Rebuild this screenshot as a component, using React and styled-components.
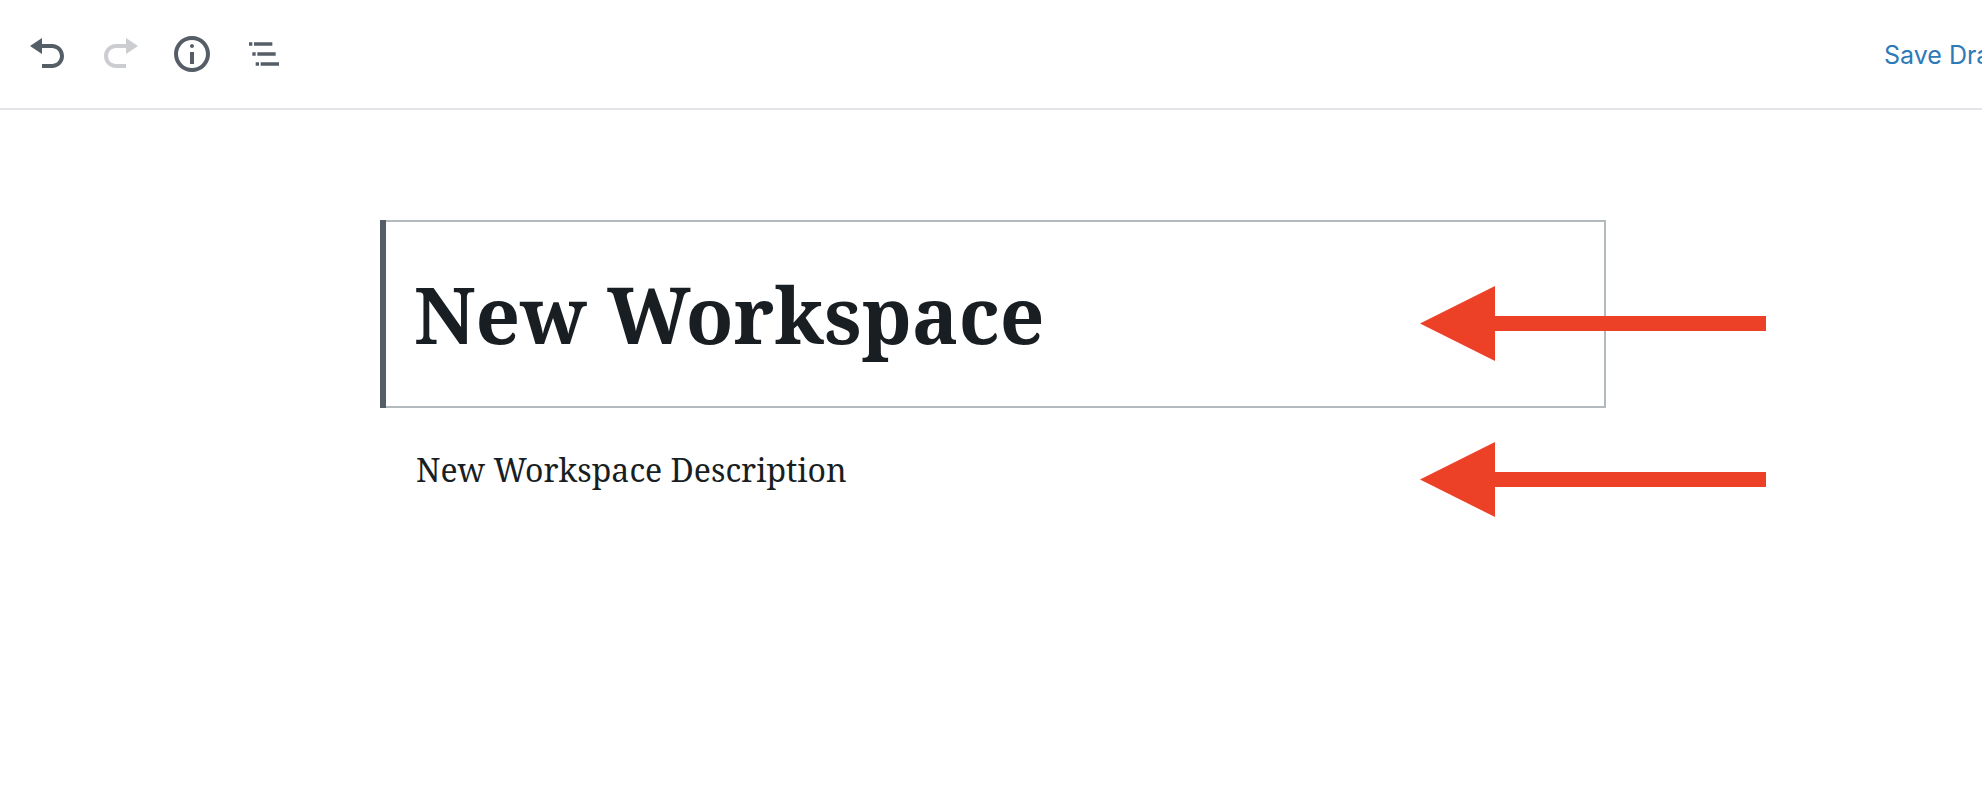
import React from "react";
import styled, { createGlobalStyle } from "styled-components";

const GlobalStyle = createGlobalStyle`
  *, *::before, *::after { box-sizing: border-box; }
  body {
    margin: 0;
    background: #fff;
    color: #191e23;
    font-family: Inter, "Liberation Sans", sans-serif;
  }
`;

const Page = styled.div`
  min-height: 100vh;
`;

const Header = styled.header`
  display: flex;
  align-items: center;
  justify-content: space-between;
  height: 110px;
  padding-left: 12px;
  border-bottom: 2px solid #e2e4e7;
  overflow: hidden;
`;

const Toolbar = styled.div`
  display: flex;
  align-items: center;
`;

const IconButton = styled.button`
  display: flex;
  padding: 16px;
  border: 0;
  background: none;
  color: #555d66;
  cursor: pointer;

  &:disabled {
    opacity: 0.3;
    cursor: default;
  }
`;

const Icon = styled.svg`
  display: block;
  width: 40px;
  height: 40px;
  fill: currentColor;
`;

const Actions = styled.div`
  display: flex;
  flex: none;
  width: 98px;
`;

const LinkButton = styled.button`
  flex: none;
  padding: 2px 0 0;
  border: 0;
  background: none;
  color: #2e7ab8;
  font: 400 25px/32px Inter, "Liberation Sans", sans-serif;
  white-space: nowrap;
  cursor: pointer;
`;

const Canvas = styled.main`
  display: flex;
  justify-content: center;
  padding: 110px 0 110px 4px;
`;

const Blocks = styled.div`
  display: flex;
  flex-direction: column;
  gap: 40px;
  width: 100%;
  max-width: 1226px;
`;

const Block = styled.div`
  position: relative;
  display: flex;
  align-items: center;
  min-height: 44px;
  padding: 0 36px;
`;

const SelectedBlock = styled(Block)`
  min-height: 188px;
  padding: 0 32px;
  border: 2px solid #b3babd;

  &::before {
    content: "";
    position: absolute;
    top: -2px;
    bottom: -2px;
    left: -2px;
    width: 6px;
    background: #555d66;
  }
`;

const TextField = styled.input`
  width: 100%;
  padding: 0;
  border: 0;
  outline: 0;
  background: none;
  color: #191e23;
  font-family: "Noto Serif", "DejaVu Serif Condensed", "DejaVu Serif", serif;
`;

const TitleField = styled(TextField)`
  font-size: 78px;
  font-weight: 700;
  line-height: 108px;
`;

const DescriptionField = styled(TextField)`
  font-size: 32px;
  line-height: 44px;
`;

const ArrowMark = styled.svg`
  position: absolute;
  top: calc(50% - 28px);
  left: 1040px;
  width: 346px;
  height: 75px;
  fill: #ec4027;
  pointer-events: none;

  ${SelectedBlock} > & {
    left: 1038px;
  }
`;

function Arrow() {
  return (
    <ArrowMark viewBox="0 0 346 75" aria-hidden="true">
      <path d="M0 37.5 75 0V30H346V45H75V75Z" />
    </ArrowMark>
  );
}

const tools = [
  {
    label: "Undo",
    box: "0 0 20 20",
    d: "M12 5H7V2L1 6l6 4V7h5c2.2 0 4 1.8 4 4s-1.8 4-4 4H7v2h5c3.3 0 6-2.7 6-6s-2.7-6-6-6z",
  },
  {
    label: "Redo",
    box: "0 0 20 20",
    disabled: true,
    d: "M8 5h5V2l6 4-6 4V7H8c-2.2 0-4 1.8-4 4s1.8 4 4 4h5v2H8c-3.3 0-6-2.7-6-6s2.7-6 6-6z",
  },
  {
    label: "Content structure",
    box: "0 0 20 20",
    d: "M9 15h2V9H9v6zm1-10c-.5 0-1 .5-1 1s.5 1 1 1 1-.5 1-1-.5-1-1-1zm0-4c-5 0-9 4-9 9s4 9 9 9 9-4 9-9-4-9-9-9zm0 16c-3.9 0-7-3.1-7-7s3.1-7 7-7 7 3.1 7 7-3.1 7-7 7z",
  },
  {
    label: "Block navigation",
    box: "0 0 24 24",
    d: "M5 5H3v2h2V5zm3 8h11v-2H8v2zm9-8H6v2h11V5zM7 11H5v2h2v-2zm0 8h2v-2H7v2zm3-2v2h11v-2H10z",
  },
];

export default function App() {
  return (
    <Page>
      <GlobalStyle />
      <Header>
        <Toolbar role="toolbar" aria-label="Document tools">
          {tools.map((tool) => (
            <IconButton
              key={tool.label}
              type="button"
              aria-label={tool.label}
              disabled={tool.disabled}
            >
              <Icon viewBox={tool.box} aria-hidden="true">
                <path d={tool.d} />
              </Icon>
            </IconButton>
          ))}
        </Toolbar>
        <Actions>
          <LinkButton type="button">Save Draft</LinkButton>
        </Actions>
      </Header>
      <Canvas>
        <Blocks>
          <SelectedBlock>
            <TitleField aria-label="Title" defaultValue="New Workspace" />
            <Arrow />
          </SelectedBlock>
          <Block>
            <DescriptionField
              aria-label="Description"
              defaultValue="New Workspace Description"
            />
            <Arrow />
          </Block>
        </Blocks>
      </Canvas>
    </Page>
  );
}
